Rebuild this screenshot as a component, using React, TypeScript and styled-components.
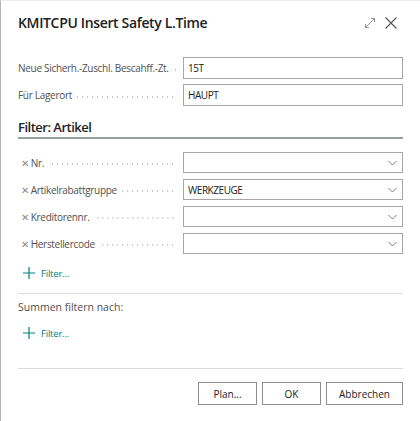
import React from "react";
import styled, { createGlobalStyle } from "styled-components";

const Global = createGlobalStyle`
  html, body { margin: 0; padding: 0; background: #fff; }
  body { font-family: "Segoe UI", "Open Sans", "Noto Sans", sans-serif; color: #212121; }
  * { box-sizing: border-box; }
`;

const Dialog = styled.div`
  width: 420px;
  height: 421px;
  border-left: 1px solid #b4b4b4;
  border-top: 1px solid #ececec;
  padding: 0 17px;
  display: flex;
  flex-direction: column;
`;

const Header = styled.div`
  display: flex;
  align-items: center;
  justify-content: space-between;
  height: 22px;
  margin-top: 11px;
`;

const Title = styled.h1`
  margin: 0;
  font-size: 14px;
  line-height: 22px;
  font-weight: 600;
  letter-spacing: -0.35px;
  color: #212121;
`;

const HeaderIcons = styled.div`
  display: flex;
  gap: 9px;
  align-items: center;
  margin-right: 6px;
`;

const IconBtn = styled.span`
  display: inline-flex;
  width: 12px;
  height: 12px;
`;

const Section = styled.div<{ $top: number; $gap: number }>`
  display: flex;
  flex-direction: column;
  gap: ${(p) => p.$gap}px;
  margin-top: ${(p) => p.$top}px;
`;

const Row = styled.div<{ $h: number }>`
  display: flex;
  align-items: center;
  height: ${(p) => p.$h}px;
`;

const Label = styled.div`
  width: 165px;
  flex: none;
  display: flex;
  align-items: center;
  padding-right: 8px;
  font-size: 10px;
  letter-spacing: -0.3px;
  color: #505050;
  white-space: nowrap;
  overflow: hidden;
`;

const LabelText = styled.span`
  flex: none;
`;

const Leader = styled.span`
  flex: 1;
  margin-left: 5px;
  margin-top: 3px;
  height: 2px;
  background-image: radial-gradient(circle, #c4c4c4 0.6px, transparent 0.9px);
  background-size: 5px 2px;
  background-repeat: repeat-x;
  background-position: right center;
  min-width: 4px;
`;

const Remove = styled.span`
  font-size: 10px;
  color: #8a8a8a;
  margin: 0 2px 0 3px;
`;

const Field = styled.div`
  flex: 1;
  height: 100%;
  border: 1px solid #a6a6a6;
  display: flex;
  align-items: center;
  justify-content: space-between;
  padding: 0 5px 0 4px;
  font-size: 10px;
  letter-spacing: -0.45px;
  color: #212121;
`;

const Heading = styled.div`
  margin-top: 12px;
  font-size: 13px;
  line-height: 18px;
  font-weight: 600;
  letter-spacing: -0.5px;
  padding-bottom: 1px;
  border-bottom: 2px solid #9a9fa6;
`;

const AddFilter = styled.div<{ $top: number }>`
  display: flex;
  align-items: center;
  gap: 6px;
  margin-top: ${(p) => p.$top}px;
  padding-left: 5px;
  color: #00807d;
  font-size: 9.5px;
  letter-spacing: -0.2px;
  height: 14px;
`;

const Divider = styled.div<{ $top: number }>`
  margin-top: ${(p) => p.$top}px;
  border-top: 1px solid #dcdcdc;
`;

const Plain = styled.div`
  margin-top: 5px;
  font-size: 10.5px;
  color: #505050;
  height: 16px;
  line-height: 16px;
`;

const Footer = styled.div`
  display: flex;
  justify-content: flex-end;
  gap: 5px;
  margin-top: 13px;
`;

const Button = styled.button<{ $w: number }>`
  width: ${(p) => p.$w}px;
  height: 23px;
  border: 1px solid #8e8e8e;
  background: #fff;
  font-family: inherit;
  font-size: 10px;
  color: #212121;
  padding: 0;
`;

const Chevron = () => (
  <svg width="9" height="6" viewBox="0 0 9 6" fill="none">
    <path d="M0.5 1 L4.5 5 L8.5 1" stroke="#7a7a7a" strokeWidth="1" />
  </svg>
);

const Plus = () => (
  <svg width="12" height="12" viewBox="0 0 12 12">
    <path d="M6 0 V12 M0 6 H12" stroke="#00807d" strokeWidth="1.2" />
  </svg>
);

const plainRows = [
  { label: "Neue Sicherh.-Zuschl. Bescahff.-Zt.", value: "15T" },
  { label: "Für Lagerort", value: "HAUPT" },
];

const filterRows = [
  { label: "Nr.", value: "" },
  { label: "Artikelrabattgruppe", value: "WERKZEUGE" },
  { label: "Kreditorennr.", value: "" },
  { label: "Herstellercode", value: "" },
];

export default function App() {
  return (
    <>
      <Global />
      <Dialog>
        <Header>
          <Title>KMITCPU Insert Safety L.Time</Title>
          <HeaderIcons>
            <IconBtn>
              <svg width="12" height="12" viewBox="0 0 12 12" fill="none" stroke="#999" strokeWidth="1">
                <path d="M1.5 10.5 L10.5 1.5 M7 1.5 H10.5 V5 M1.5 7 V10.5 H5" />
              </svg>
            </IconBtn>
            <IconBtn>
              <svg width="12" height="12" viewBox="0 0 12 12" fill="none" stroke="#555" strokeWidth="1.1">
                <path d="M0.5 0.5 L11.5 11.5 M11.5 0.5 L0.5 11.5" />
              </svg>
            </IconBtn>
          </HeaderIcons>
        </Header>

        <Section $top={23} $gap={5}>
          {plainRows.map((r) => (
            <Row key={r.label} $h={22}>
              <Label>
                <LabelText>{r.label}</LabelText>
                <Leader />
              </Label>
              <Field>{r.value}</Field>
            </Row>
          ))}
        </Section>

        <Heading>Filter: Artikel</Heading>

        <Section $top={13} $gap={6}>
          {filterRows.map((r) => (
            <Row key={r.label} $h={21}>
              <Label>
                <Remove>✕</Remove>
                <LabelText>{r.label}</LabelText>
                <Leader />
              </Label>
              <Field>
                <span>{r.value}</span>
                <Chevron />
              </Field>
            </Row>
          ))}
        </Section>

        <AddFilter $top={12}>
          <Plus />
          <span>Filter...</span>
        </AddFilter>

        <Divider $top={13} />
        <Plain>Summen filtern nach:</Plain>
        <AddFilter $top={11}>
          <Plus />
          <span>Filter...</span>
        </AddFilter>

        <Divider $top={28} />
        <Footer>
          <Button $w={59}>Plan...</Button>
          <Button $w={59}>OK</Button>
          <Button $w={77}>Abbrechen</Button>
        </Footer>
      </Dialog>
    </>
  );
}
